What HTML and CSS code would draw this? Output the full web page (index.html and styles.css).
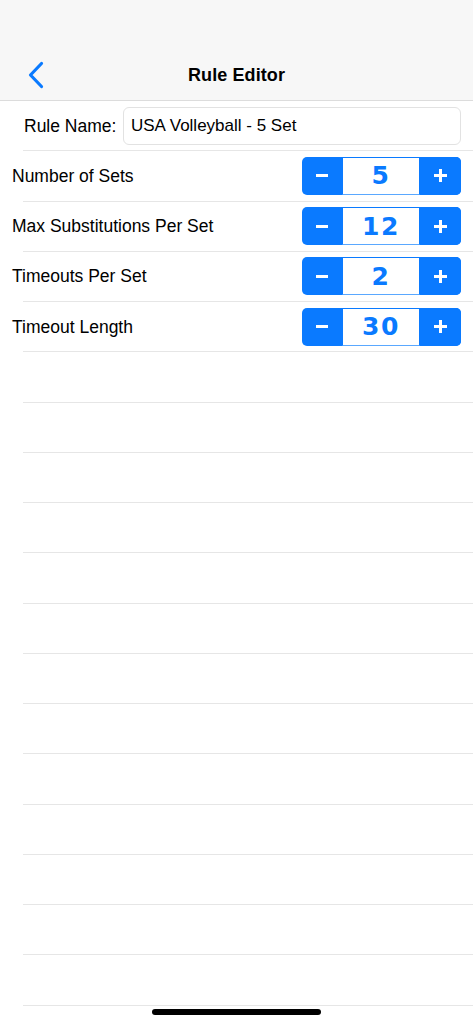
FILE: index.html
```html
<!DOCTYPE html>
<html lang="en">
<head>
<meta charset="utf-8">
<title>Rule Editor</title>
<link rel="stylesheet" href="styles.css">
</head>
<body>
<div class="screen">
  <header class="nav">
    <div class="nav-bar">
      <button class="back" aria-label="Back">
        <svg width="18" height="28" viewBox="0 0 18 28"><path d="M14.5 2.5 L3.5 14 L14.5 25.5" fill="none" stroke="#0a7aff" stroke-width="3.2" stroke-linecap="round" stroke-linejoin="round"/></svg>
      </button>
      <h1 class="title">Rule Editor</h1>
      <span class="nav-spacer"></span>
    </div>
  </header>
  <main class="list">
    <div class="row row-name">
      <label class="name-label">Rule Name:</label>
      <div class="field">USA Volleyball - 5 Set</div>
    </div>
    <div class="row">
      <span class="label">Number of Sets</span>
      <div class="stepper"><span class="btn minus"></span><span class="value">5</span><span class="btn plus"></span></div>
    </div>
    <div class="row">
      <span class="label">Max Substitutions Per Set</span>
      <div class="stepper"><span class="btn minus"></span><span class="value">12</span><span class="btn plus"></span></div>
    </div>
    <div class="row">
      <span class="label">Timeouts Per Set</span>
      <div class="stepper"><span class="btn minus"></span><span class="value">2</span><span class="btn plus"></span></div>
    </div>
    <div class="row">
      <span class="label">Timeout Length</span>
      <div class="stepper"><span class="btn minus"></span><span class="value">30</span><span class="btn plus"></span></div>
    </div>
    <div class="row"></div>
    <div class="row"></div>
    <div class="row"></div>
    <div class="row"></div>
    <div class="row"></div>
    <div class="row"></div>
    <div class="row"></div>
    <div class="row"></div>
    <div class="row"></div>
    <div class="row"></div>
    <div class="row"></div>
    <div class="row"></div>
    <div class="row"></div>
  </main>
  <div class="home-indicator"></div>
</div>
</body>
</html>
```

FILE: styles.css
```css
* { box-sizing: border-box; }
html, body {
  margin: 0;
  padding: 0;
  background: #ffffff;
}
body {
  font-family: "Liberation Sans", Arial, sans-serif;
  color: #000;
}
.screen {
  position: relative;
  width: 473px;
  height: 1024px;
  overflow: hidden;
  background: #fff;
}
.nav {
  height: 101px;
  background: #f7f7f7;
  border-bottom: 1px solid #dcdcdc;
  padding-top: 50px;
}
.nav-bar {
  height: 50px;
  display: flex;
  align-items: center;
  justify-content: space-between;
  padding: 0 24px;
}
.back {
  width: 50px;
  height: 40px;
  border: 0;
  background: none;
  padding: 0 0 0 3px;
  display: flex;
  align-items: center;
}
.nav-spacer { width: 50px; }
.title {
  margin: 0;
  font-size: 18px;
  font-weight: 700;
  letter-spacing: 0.1px;
  padding-top: 1px;
}
.list {
  display: flex;
  flex-direction: column;
}
.row {
  height: 50.25px;
  flex: none;
  display: flex;
  align-items: center;
  justify-content: space-between;
  padding: 0 12px;
  background: linear-gradient(#e6e6e6, #e6e6e6) no-repeat 23px 100% / calc(100% - 23px) 1px;
}
.row-name {
  padding-left: 24px;
}
.name-label, .label {
  font-size: 17.5px;
}
.field {
  width: 338px;
  height: 38px;
  border: 1px solid #e2e2e2;
  border-radius: 6px;
  display: flex;
  align-items: center;
  padding-left: 7px;
  font-size: 17px;
  margin-bottom: 1px;
}
.stepper {
  display: flex;
  width: 159px;
  height: 38px;
  background: #0a7aff;
  border-radius: 5px;
  overflow: hidden;
  margin-bottom: 1px;
}
.btn {
  width: 40px;
  display: flex;
  align-items: center;
  justify-content: center;
}
.btn::before {
  content: "";
  display: block;
  width: 12px;
  height: 3px;
  background: #fff;
}
.btn.plus {
  width: 41px;
  background:
    linear-gradient(#fff, #fff) no-repeat center / 3px 13px,
    #0a7aff;
}
.btn.plus::before { width: 13px; }
.value {
  flex: 1;
  background: #fff;
  border: 1px solid #0a7aff;
  border-bottom-color: #5aa8ff;
  display: flex;
  align-items: center;
  justify-content: center;
  font-family: "DejaVu Sans", sans-serif;
  font-weight: 700;
  font-size: 25px;
  letter-spacing: 1.5px;
  color: #0a7aff;
}
.home-indicator {
  position: absolute;
  left: 152px;
  bottom: 9px;
  width: 169px;
  height: 6px;
  border-radius: 3px;
  background: #000;
}
```
